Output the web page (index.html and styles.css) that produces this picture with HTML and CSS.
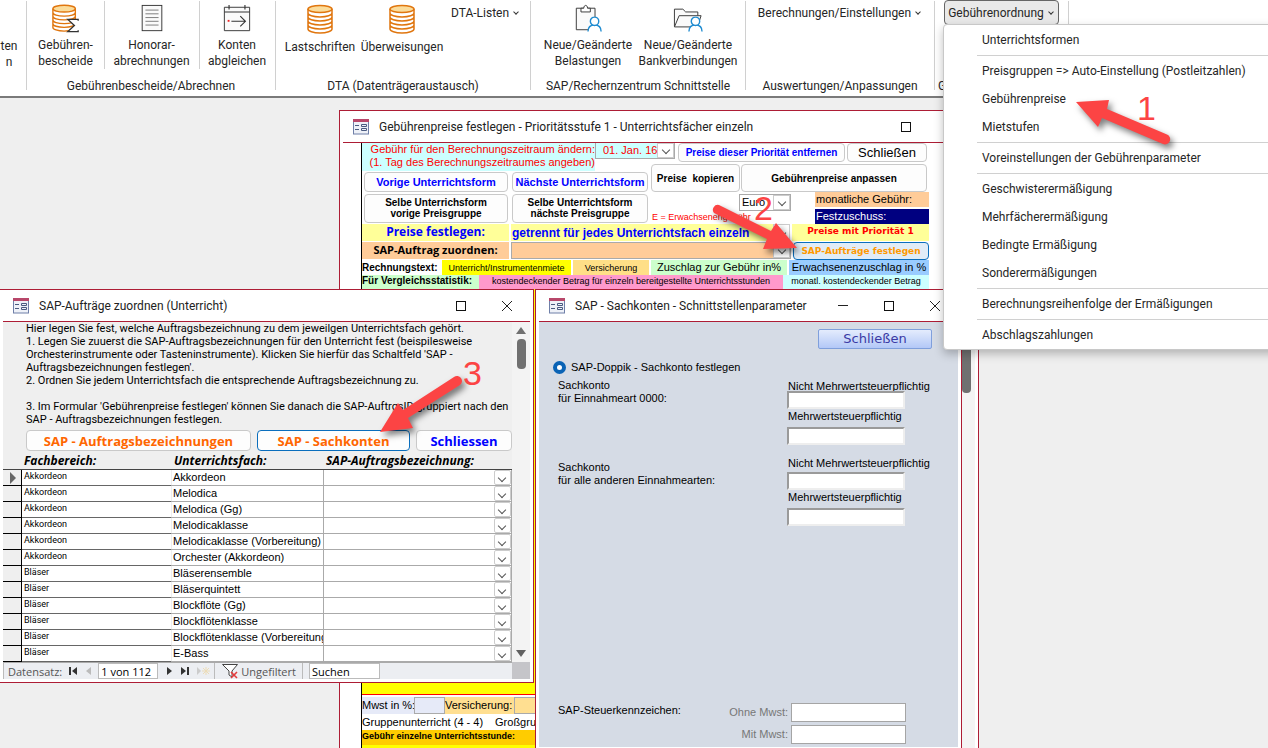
FILE: index.html
```html
<!DOCTYPE html>
<html lang="de">
<head>
<meta charset="utf-8">
<title>Gebührenordnung</title>
<link rel="stylesheet" href="styles.css">
</head>
<body>
<svg class="defs" aria-hidden="true">
  <symbol id="coins" viewBox="0 0 26 30">
    <path d="M1 5v20c0 2 5 4 12 4s12-2 12-4V5" fill="#fff"/>
    <ellipse cx="13" cy="5" rx="12" ry="3.6" fill="#fbdc9a"/>
    <g fill="none" stroke="#e0760f" stroke-width="1.5"><ellipse cx="13" cy="5" rx="12" ry="3.6"/><path d="M1 5v20c0 2 5 4 12 4s12-2 12-4V5M1 9c0 2.200 5 4 12 4s12-1.800 12-4M1 13c0 2.200 5 4 12 4s12-1.800 12-4M1 17c0 2.200 5 4 12 4s12-1.800 12-4M1 21c0 2.200 5 4 12 4s12-1.800 12-4"/></g>
  </symbol>
  <symbol id="form" viewBox="0 0 16 16">
    <rect x=".5" y=".5" width="15" height="14.500" fill="#eef1f8" stroke="#6f7fa8"/>
    <rect width="16" height="3" fill="#b8476a"/>
    <path d="M2 6.500h4M2 10.500h4M8.500 5.500h5v2h-5zM8.500 9.500h5v2h-5z" fill="none" stroke="#4a5a80"/>
  </symbol>
  <symbol id="max" viewBox="0 0 12 12"><rect x="1.500" y="1.500" width="9" height="9" fill="none" stroke="#111"/></symbol>
  <symbol id="close" viewBox="0 0 12 12"><path d="M1 1l10 10M11 1L1 11" fill="none" stroke="#222"/></symbol>
  <symbol id="min" viewBox="0 0 12 12"><path d="M1 5.500h10" fill="none" stroke="#222"/></symbol>
  <symbol id="person" viewBox="0 0 16 17"><path d="M1 16.500c0-5 3-7 7-7s7 2 7 7" fill="#fff" stroke="#1e8bd0" stroke-width="1.500"/><circle cx="8" cy="5.500" r="4.500" fill="#fff" stroke="#1e8bd0" stroke-width="1.500"/></symbol>
</svg>

<header class="ribbon">
  <section class="group g0"><div class="tools"><button class="tool cut"><span>ten<br>n</span></button></div></section>
  <section class="group g1">
    <div class="tools">
      <button class="tool"><svg viewBox="0 0 30 31" width="30" height="31"><use href="#coins" width="26" height="30"/><path d="M28 18v-1.500H17l7 6.500-7 6.500h11V28" fill="#fff" stroke="#333" stroke-width="1.400"/></svg><span>Gebühren-<br>bescheide</span></button>
      <button class="tool split wide"><svg viewBox="0 0 24 31" width="24" height="31"><rect x="1.500" y="1.500" width="21" height="27" fill="#fafafa" stroke="#333"/><path d="M5 6.500h14M5 10.500h14M5 14.500h14M5 18.500h14M5 22.500h14" stroke="#777"/></svg><span>Honorar-<br>abrechnungen</span></button>
      <button class="tool split"><svg viewBox="0 0 30 31" width="30" height="31"><path d="M1.500 3.500h27v25h-27z" fill="#fafafa" stroke="#333"/><path d="M1.500 8.500h27M6.500 1v5M23.500 1v5M9 18.500h15M18.500 13l5.500 5.500-5.500 5.500" fill="none" stroke="#333" stroke-width="1.200"/><path d="M5 17h2v2H5z" fill="#e22"/></svg><span>Konten<br>abgleichen</span></button>
    </div>
    <h2>Gebührenbescheide/Abrechnen</h2>
  </section>
  <section class="group g2">
    <div class="tools">
      <button class="tool"><svg width="26" height="31"><use href="#coins" width="26" height="30"/></svg><span>Lastschriften</span></button>
      <button class="tool"><svg width="26" height="31"><use href="#coins" width="26" height="30"/></svg><span>Überweisungen</span></button>
      <button class="drop">DTA-Listen<i></i></button>
    </div>
    <h2>DTA (Datenträgeraustausch)</h2>
  </section>
  <section class="group g3">
    <div class="tools">
      <button class="tool"><svg viewBox="0 0 30 31" width="30" height="31"><path d="M2.500 4.500h20v23h-20z" fill="#fafafa" stroke="#333"/><path d="M7.500 8.500v-4h3c0-4 4-4 4 0h3v4z" fill="#fff" stroke="#333"/><use href="#person" x="14" y="13" width="16" height="17"/></svg><span>Neue/Geänderte<br>Belastungen</span></button>
      <button class="tool"><svg viewBox="0 0 32 31" width="32" height="31"><path d="M1.500 24V5.500h9l3 3h13v4" fill="#fafafa" stroke="#333"/><path d="M1.500 24.500l5-12H30l-4 12z" fill="#fafafa" stroke="#333"/><use href="#person" x="16" y="13" width="16" height="17"/></svg><span>Neue/Geänderte<br>Bankverbindungen</span></button>
    </div>
    <h2>SAP/Rechernzentrum Schnittstelle</h2>
  </section>
  <section class="group g4">
    <div class="tools"><button class="drop">Berechnungen/Einstellungen<i></i></button></div>
    <h2>Auswertungen/Anpassungen</h2>
  </section>
  <section class="group g5">
    <div class="tools"><button class="drop open" aria-expanded="true">Gebührenordnung<i></i></button></div>
    <h2>G</h2>
    <nav class="menu">
      <button>Unterrichtsformen</button>
      <hr>
      <button>Preisgruppen =&gt; Auto-Einstellung (Postleitzahlen)</button>
      <button>Gebührenpreise</button>
      <button>Mietstufen</button>
      <hr>
      <button>Voreinstellungen der Gebührenparameter</button>
      <hr>
      <button>Geschwisterermäßigung</button>
      <button>Mehrfächerermäßigung</button>
      <button>Bedingte Ermäßigung</button>
      <button>Sonderermäßigungen</button>
      <hr>
      <button>Berechnungsreihenfolge der Ermäßigungen</button>
      <hr>
      <button>Abschlagszahlungen</button>
    </nav>
  </section>
</header>

<main class="desktop">
  <section class="window prices">
    <div class="titlebar"><svg width="16" height="16"><use href="#form"/></svg><h1>Gebührenpreise festlegen - Prioritätsstufe 1 - Unterrichtsfächer einzeln</h1>
      <button aria-label="Maximieren"><svg width="12" height="12"><use href="#max"/></svg></button><button aria-label="Schließen"><svg width="12" height="12"><use href="#close"/></svg></button></div>
    <div class="pane">
      <div class="selector"></div>
      <div class="price-form">
        <div class="top-grid">
          <label class="period" for="period">Gebühr für den Berechnungszeitraum ändern:<br>(1. Tag des Berechnungszeitraumes angeben)</label>
          <div class="top-row">
            <span class="combo date"><select id="period"><option>01. Jan. 16</option></select></span>
            <button class="btn blue remove">Preise dieser Priorität entfernen</button>
            <button class="btn plain">Schließen</button>
          </div>
          <button class="btn blue prev">Vorige Unterrichtsform</button>
          <button class="btn blue next">Nächste Unterrichtsform</button>
          <div class="copy-row"><button class="btn copy">Preise&nbsp; kopieren</button><button class="btn adapt">Gebührenpreise anpassen</button></div>
          <button class="btn prev-group">Selbe Unterrichsform<br>vorige Preisgruppe</button>
          <button class="btn next-group">Selbe Unterrichtsform<br>nächste Preisgruppe</button>
          <div class="currency"><span class="combo"><select aria-label="Währung"><option>Euro</option></select></span><span class="adult">E = Erwachsenengebühr</span></div>
          <div class="sums"><span class="monthly">monatliche Gebühr:</span><span class="grant">Festzuschuss:</span></div>
        </div>
        <div class="line set">
          <label for="mode" class="cap">Preise festlegen:</label>
          <span class="combo mode"><select id="mode"><option>getrennt für jedes Unterrichtsfach einzeln</option></select></span>
          <span class="prio">Preise mit Priorität 1</span>
        </div>
        <div class="line order">
          <label for="order" class="cap">SAP-Auftrag zuordnen:</label>
          <span class="combo"><select id="order"><option></option></select></span>
          <button class="btn assign">SAP-Aufträge festlegen</button>
        </div>
        <div class="line tags">
          <b class="t1">Rechnungstext:</b><span class="t2">Unterricht/Instrumentenmiete</span><span class="t3">Versicherung</span><span class="t4">Zuschlag zur Gebühr in%</span><span class="t5">Erwachsenenzuschlag in %</span>
        </div>
        <div class="line stats">
          <b class="s1">Für Vergleichsstatistik:</b><span class="s2">kostendeckender Betrag für einzeln bereitgestellte Unterrichtsstunden</span><span class="s3">monatl. kostendeckender Betrag</span>
        </div>
        <div class="records">
          <div class="vat"><label for="vat">Mwst in %:</label><input id="vat"><label class="ins" for="ins">Versicherung:</label><input id="ins" class="ins"></div>
          <div class="kinds"><span>Gruppenunterricht (4 - 4)</span><span>Großgruppe</span></div>
          <div class="single">Gebühr einzelne Unterrichtsstunde:</div>
        </div>
      </div>
      <div class="scroll"><div class="thumb"></div></div>
    </div>
  </section>

  <section class="window orders">
    <div class="titlebar"><svg width="16" height="16"><use href="#form"/></svg><h1>SAP-Aufträge zuordnen (Unterricht)</h1>
      <button aria-label="Maximieren"><svg width="12" height="12"><use href="#max"/></svg></button><button aria-label="Schließen"><svg width="12" height="12"><use href="#close"/></svg></button></div>
    <div class="pane">
      <div class="order-form">
        <div class="intro">
          <p>Hier legen Sie fest, welche Auftragsbezeichnung zu dem jeweilgen Unterrichtsfach gehört.</p>
          <p>1. Legen Sie zuuerst die SAP-Auftragsbezeichnungen für den Unterricht fest (beispilesweise<br>Orchesterinstrumente oder Tasteninstrumente). Klicken Sie hierfür das Schaltfeld 'SAP -<br>Auftragsbezeichnungen festlegen'.</p>
          <p>2. Ordnen Sie jedem Unterrichtsfach die entsprechende Auftragsbezeichnung zu.</p>
          <p class="gap">3. Im Formular 'Gebührenpreise festlegen' können Sie danach die SAP-AuftrgsID gruppiert nach den<br>SAP - Auftragsbezeichnungen festlegen.</p>
        </div>
        <div class="actions"><button class="btn big names">SAP - Auftragsbezeichnungen</button><button class="btn big accounts">SAP - Sachkonten</button><button class="btn big shut">Schliessen</button></div>
        <table>
          <thead><tr><th class="c0"></th><th class="c1">Fachbereich:</th><th class="c2">Unterrichtsfach:</th><th class="c3">SAP-Auftragsbezeichnung:</th></tr></thead>
          <tbody>
            <tr class="current"><td></td><td>Akkordeon</td><td>Akkordeon</td><td><span class="combo"><select aria-label="Auftrag 1"><option></option></select></span></td></tr>
            <tr><td></td><td>Akkordeon</td><td>Melodica</td><td><span class="combo"><select aria-label="Auftrag 2"><option></option></select></span></td></tr>
            <tr><td></td><td>Akkordeon</td><td>Melodica (Gg)</td><td><span class="combo"><select aria-label="Auftrag 3"><option></option></select></span></td></tr>
            <tr><td></td><td>Akkordeon</td><td>Melodicaklasse</td><td><span class="combo"><select aria-label="Auftrag 4"><option></option></select></span></td></tr>
            <tr><td></td><td>Akkordeon</td><td>Melodicaklasse (Vorbereitung)</td><td><span class="combo"><select aria-label="Auftrag 5"><option></option></select></span></td></tr>
            <tr><td></td><td>Akkordeon</td><td>Orchester (Akkordeon)</td><td><span class="combo"><select aria-label="Auftrag 6"><option></option></select></span></td></tr>
            <tr><td></td><td>Bläser</td><td>Bläserensemble</td><td><span class="combo"><select aria-label="Auftrag 7"><option></option></select></span></td></tr>
            <tr><td></td><td>Bläser</td><td>Bläserquintett</td><td><span class="combo"><select aria-label="Auftrag 8"><option></option></select></span></td></tr>
            <tr><td></td><td>Bläser</td><td>Blockflöte (Gg)</td><td><span class="combo"><select aria-label="Auftrag 9"><option></option></select></span></td></tr>
            <tr><td></td><td>Bläser</td><td>Blockflötenklasse</td><td><span class="combo"><select aria-label="Auftrag 10"><option></option></select></span></td></tr>
            <tr><td></td><td>Bläser</td><td>Blockflötenklasse (Vorbereitung</td><td><span class="combo"><select aria-label="Auftrag 11"><option></option></select></span></td></tr>
            <tr><td></td><td>Bläser</td><td>E-Bass</td><td><span class="combo"><select aria-label="Auftrag 12"><option></option></select></span></td></tr>
          </tbody>
        </table>
        <div class="recnav">
          <label for="rec">Datensatz:</label>
          <button aria-label="Erster"><svg width="10" height="8"><path d="M1 0h2v8H1zM9 0v8L4 4z" fill="#333"/></svg></button>
          <button aria-label="Voriger"><svg width="10" height="8"><path d="M7 0v8L2 4z" fill="#bbb"/></svg></button>
          <input id="rec" value="1 von 112">
          <button class="after" aria-label="Nächster"><svg width="10" height="8"><path d="M3 0v8l5-4z" fill="#333"/></svg></button>
          <button aria-label="Letzter"><svg width="10" height="8"><path d="M1 0v8l5-4zM7 0h2v8H7z" fill="#333"/></svg></button>
          <button aria-label="Neuer"><svg width="14" height="8"><path d="M1 0v8l4-4z" fill="#ccc"/><path d="M10 0v8M6 4h8M7 1l6 6M13 1L7 7" stroke="#ecdcb8"/></svg></button>
          <button class="filter"><svg width="18" height="16"><path d="M1.500 1.500h15L11 8v6l-3-2V8z" fill="#fff" stroke="#444"/><path d="M10 9l6 6M16 9l-6 6" stroke="#e43b3b" stroke-width="1.600"/></svg>Ungefiltert</button>
          <input class="search" aria-label="Suchen" value="Suchen">
        </div>
      </div>
      <div class="scroll arrows"><i class="up"></i><div class="thumb"></div><i class="down"></i><div class="corner"></div></div>
    </div>
  </section>

  <section class="window accounts-win">
    <div class="titlebar"><svg width="16" height="16"><use href="#form"/></svg><h1>SAP - Sachkonten - Schnittstellenparameter</h1>
      <button aria-label="Minimieren"><svg width="12" height="12"><use href="#min"/></svg></button><button aria-label="Maximieren"><svg width="12" height="12"><use href="#max"/></svg></button><button aria-label="Schließen"><svg width="12" height="12"><use href="#close"/></svg></button></div>
    <div class="pane account-form">
      <button class="shut-blue">Schließen</button>
      <label class="mode-radio"><input type="radio" checked>SAP-Doppik - Sachkonto festlegen</label>
      <div class="pair">
        <p>Sachkonto<br>für Einnahmeart 0000:</p>
        <div><label for="a1">Nicht Mehrwertsteuerpflichtig</label><input id="a1"><label class="second" for="a2">Mehrwertsteuerpflichtig</label><input id="a2"></div>
      </div>
      <div class="pair other">
        <p>Sachkonto<br>für alle anderen Einnahmearten:</p>
        <div><label for="b1">Nicht Mehrwertsteuerpflichtig</label><input id="b1"><label class="second" for="b2">Mehrwertsteuerpflichtig</label><input id="b2"></div>
      </div>
      <div class="tax">
        <p>SAP-Steuerkennzeichen:</p>
        <div><span><label for="t1">Ohne Mwst:</label><input id="t1"></span><span><label for="t2">Mit Mwst:</label><input id="t2"></span></div>
      </div>
    </div>
  </section>
</main>

<div class="mark m1"><svg width="120" height="80" viewBox="1066 86 120 80"><path d="M1076 102L1109 100 1107 109 1167 134.500A5 5 0 0 1 1163 144L1102 118 1098 127Z"/></svg><span>1</span></div>
<div class="mark m2"><svg width="120" height="80" viewBox="700 190 120 80"><path d="M797 248L776 223 771 231 719 205A5 5 0 0 0 714 213L767 239 763 249Z"/></svg><span>2</span></div>
<div class="mark m3"><svg width="120" height="80" viewBox="365 365 120 80"><path d="M380 432L398 403 403 410 454 377A5 5 0 0 1 460 385L408 418 413 428Z"/></svg><span>3</span></div>
</body>
</html>
```

FILE: styles.css
```css
:root { --red: #ad1d35; --ui: Roboto, "Noto Sans", sans-serif; --hum: "Open Sans", "Noto Sans", sans-serif; --sans: "Liberation Sans", Arial, sans-serif; --bold: "DejaVu Sans", Verdana, sans-serif; }
* { box-sizing: border-box; }
body { margin: 0; height: 100vh; overflow: hidden; position: relative; display: flex; flex-direction: column; background: #efefef; font: 11px/13px var(--sans); color: #000; }
h1, h2, p { margin: 0; font: inherit; }
button, input, select { margin: 0; padding: 0; border: 0; border-radius: 0; background: none; font: inherit; color: inherit; min-width: 0; }
.defs { position: absolute; width: 0; height: 0; }

/* Ribbon */
.ribbon { display: flex; flex: none; height: 98px; padding-top: 1px; background: #fff; border-bottom: 2px solid #7a7a7a; font: 12px/16px var(--ui); color: #262626; }
.group { position: relative; display: flex; flex-direction: column; height: 89px; border-right: 1px solid #d0d0d0; flex: none; }
.group h2 { margin-top: auto; height: 12px; line-height: 16px; text-align: center; white-space: nowrap; }
.tools { display: flex; justify-content: center; }
.tool { display: flex; flex-direction: column; align-items: center; width: 76px; height: 68px; padding-top: 3px; white-space: nowrap; }
.tool span { margin-top: 4px; }
.tool.cut { width: 16px; padding-top: 34px; margin-right: 8px; }
.tool.cut span { margin-top: 3px; }
.split { border-left: 1px solid #d0d0d0; }
.tool.wide { width: 95px; }
.g0 { width: 27px; }
.g1 { width: 249px; }
.g2 { width: 255px; }
.g3 { width: 215px; }
.g4 { width: 189px; }
.g5 { width: 134px; }
.g2 .tool { width: 82px; }
.g2 .tools { justify-content: flex-start; padding-left: 3px; }
.g2 .drop { margin-left: 4px; }
.g3 .tool { width: 100px; }
.drop { height: 24px; padding: 0 4px; white-space: nowrap; display: flex; align-items: center; gap: 4px; }
.drop i { width: 4px; height: 4px; border: solid #333; border-width: 0 1px 1px 0; transform: rotate(45deg); margin: 0 2px 2px 1px; }
.drop.open { margin-top: -1px; height: 25px; border: 1px solid #666; border-radius: 4px; background: #e9e9e9; padding: 0 3px; }
.g5 h2 { text-align: left; padding-left: 3px; }
.menu { position: absolute; z-index: 5; left: 8px; top: 23px; width: 340px; padding: 1px 0 0 38px; background: #fff; border: 1px solid #c8c8c8; border-radius: 4px; box-shadow: 0 4px 10px rgba(0, 0, 0, .25); }
.menu button { display: block; height: 28px; white-space: nowrap; }
.menu hr { margin: 1px 0 1px -5px; border: 0; height: 1px; background: #d0d0d0; }

/* Windows */
.desktop { position: relative; flex: 1; }
.window { position: absolute; display: flex; flex-direction: column; background: #fff; border: 1px solid var(--red); padding: 0 3px 3px; }
.titlebar { display: flex; flex: none; align-items: center; height: 32px; padding-left: 10px; border-bottom: 1px solid var(--red); font: 12px/16px var(--ui); color: #222; }
.titlebar h1 { flex: 1; margin-left: 10px; white-space: nowrap; }
.titlebar button { width: 46px; height: 31px; display: grid; place-items: center; }
.pane { display: flex; flex: 1; min-height: 0; }
.prices { left: 339px; top: 12px; width: 640px; height: 660px; }
.orders { left: -1px; top: 191px; width: 535px; height: 394px; }
.accounts-win { left: 535px; top: 191px; width: 427px; height: 462px; }

.btn { border: 1px solid #c9c9c9; border-radius: 4px; background: #fdfdfd; font: bold 10px/11px var(--sans); white-space: nowrap; }
.btn.blue, .btn.shut { color: #00f; }
.combo { position: relative; display: flex; background: #fff; border: 1px solid #aaa; }
.combo select { appearance: none; flex: 1; padding: 0 15px 0 2px; white-space: nowrap; overflow: hidden; }
.combo::before { content: ""; position: absolute; right: 0; top: 0; bottom: 0; width: 15px; background: #fff; border: 1px solid #ccc; pointer-events: none; }
.combo::after { content: ""; position: absolute; right: 5px; bottom: 5px; width: 5px; height: 5px; border: solid #555; border-width: 0 1px 1px 0; transform: rotate(45deg); pointer-events: none; }

/* Price form */
.selector { width: 19px; flex: none; border-right: 1px solid #000; background: #fff; }
.price-form { display: flex; flex-direction: column; flex: 1; background: #ff0; }
.top-grid { display: grid; grid-template-columns: 150px 83px 56px 88px 76px 114px; grid-template-rows: 20px 8px 21px 32px; background: #fff; }
.period { grid-area: 1 / 1 / 3 / 3; background: #cff; color: #f00; text-align: right; white-space: nowrap; }
.top-row { grid-area: 1 / 3 / 2 / 7; display: flex; align-items: flex-start; }
.date { width: 80px; height: 16px; margin-right: 3px; background: #cff; color: #f00; border-top: 0; }
.date select { padding-left: 7px; }
.remove { width: 167px; height: 19px; margin-right: 2px; }
.btn.plain { width: 80px; height: 19px; font: 13px/15px var(--sans); }
.prev, .next { height: 20px; align-self: end; }
.btn.prev, .btn.next { font-size: 11px; }
.prev, .prev-group { grid-column: 1; margin: 0 4px 0 2px; }
.next, .next-group { grid-column: 2 / 4; margin-right: 3px; }
.prev, .next { grid-row: 3; }
.prev-group, .next-group { grid-row: 4; height: 29px; align-self: center; }
.copy-row { grid-area: 2 / 4 / 4 / 7; display: flex; gap: 1px; margin-top: 1px; }
.copy { width: 89px; }
.adapt { width: 186px; }
.currency { grid-area: 4 / 4 / 5 / 6; display: flex; flex-direction: column; padding: 2px 24px 0 1px; }
.currency .combo { width: 52px; height: 17px; align-self: flex-end; }
.adult { color: #f00; font-size: 9px; white-space: nowrap; }
.sums { grid-area: 4 / 6; display: flex; flex-direction: column; gap: 2px; line-height: 14px; white-space: nowrap; }
.sums span { padding-left: 1px; height: 15px; }
.monthly { background: #fc9; }
.grant { background: #000080; color: #fff; }
.line { display: flex; width: 567px; white-space: nowrap; box-shadow: 19px 0 #fff, 40px 0 #fff; background: #fff; }
.cap { width: 147px; font: bold 12px/16px var(--hum); text-align: center; }
.set { height: 18px; padding-bottom: 1px; gap: 2px; }
.set .cap, .prio { background: #ff9; color: #00f; }
.mode { flex: 1; border: 0; background: #ff9; color: #00f; font: bold 12px/16px var(--sans); }
.mode select { padding-left: 1px; }
.prio { width: 137px; color: #f00; font: bold 9px/14px var(--bold); text-align: center; }
.order { height: 18px; gap: 2px; }
.order .cap, .order .combo { background: #fc9; }
.order .cap { height: 17px; font-size: 11px; }
.order .combo { flex: 1; height: 17px; }
.btn.assign { width: 136px; height: 18px; border-color: #0a6ebd; background: #e0ecf7; color: #f90; font: bold 9px/14px var(--bold); }
.tags { height: 15px; gap: 2px; font-size: 9px; line-height: 16px; text-align: center; }
.tags b, .stats b { font-size: 10px; text-align: left; }
.t1 { width: 78px; }
.t2 { width: 129px; background: #ff0; }
.t3 { width: 76px; background: #ffdf87; }
.t4 { width: 136px; background: #cfc; font-size: 11px; line-height: 14px; }
.t5 { flex: 1; background: #9cf; font-size: 11px; line-height: 14px; }
.stats { height: 14px; font-size: 9px; line-height: 12px; text-align: center; }
.s1 { width: 117px; background: #cfc; }
.s2 { width: 304px; background: #f9c; }
.s3 { flex: 1; background: #cff; }
.records { margin-top: auto; margin-bottom: 21px; background: #fff; border-top: 1px solid #f00; padding-top: 2px; white-space: nowrap; }
.vat { display: flex; height: 17px; line-height: 16px; }
.vat label, .vat input { background: #e6eaf8; }
.vat label { width: 52px; }
.vat input { width: 31px; border: 1px solid #aaa; }
.vat .ins { width: 69px; background: #ffdf91; }
.kinds { display: flex; gap: 12px; height: 16px; line-height: 16px; }
.single { height: 15px; background: #fc0; font: bold 9px/12px var(--sans); }
.scroll { width: 14px; flex: none; background: #f3f3f3; }
.prices .thumb { width: 9px; height: 250px; margin: 0 0 0 1px; border-radius: 4px; background: #707070; }
.prices .scroll { background: #f4f4f4; }

/* Orders form */
.order-form { flex: 1; min-width: 0; display: flex; flex-direction: column; background: #efefef; }
.intro { height: 108px; padding: 0 0 0 23px; font: 11px/13px var(--ui); white-space: nowrap; }
.gap { margin-top: 13px; }
.actions { display: flex; gap: 6px; padding: 1px 0 1px 23px; }
.btn.big { height: 21px; font: bold 13px/16px var(--hum); color: #f60; }
.names { width: 225px; }
.btn.accounts { width: 153px; border-color: #0a6ebd; }
.btn.big.shut { width: 96px; color: #00f; }
table { border-collapse: separate; border-spacing: 0; table-layout: fixed; width: 100%; }
th { height: 18px; padding: 0 0 0 2px; text-align: left; font: italic bold 12px/16px var(--hum); border-bottom: 1px solid #444; white-space: nowrap; }
.c0 { width: 19px; }
.c1 { width: 150px; }
.c2 { width: 152px; }
td { height: 16px; padding: 0 0 0 2px; background: #fff; border-right: 1px solid #aaa; border-bottom: 1px solid #aaa; white-space: nowrap; overflow: hidden; line-height: 15px; }
td:nth-child(1) { background: #efefef; border-color: #000; }
td:nth-child(2) { border-right-color: #eee; border-bottom-color: #666; font: 9px/12px var(--ui); vertical-align: top; }
td:nth-child(3) { padding-left: 1px; }
td:nth-child(4) { padding: 0; }
td .combo { border: 0; height: 15px; }
td .combo::after { bottom: 4px; right: 6px; }
td .combo::before { border-radius: 2px; }
.current td:first-child::after { content: ""; display: block; width: 0; height: 0; margin-left: 5px; border: 6px solid transparent; border-left-color: #666; border-right: 0; }
.recnav { display: flex; align-items: center; flex: 1; border-top: 1px solid #aaa; border-left: 1px solid #bbb; background: #eceef2; padding-left: 4px; font: 11px/15px var(--hum); color: #555; }
.recnav button { display: flex; align-items: center; margin-left: 6px; }
.recnav input { width: 60px; height: 16px; margin-left: 2px; padding-left: 2px; border: 1px solid #bbb; background: #fff; color: #000; }
.recnav button + input { margin-left: 4px; }
.recnav .filter { margin-left: 4px; padding: 0 6px; border: solid #bbb; border-width: 0 1px; gap: 2px; }
.recnav .search { width: 71px; margin-left: 6px; }
.arrows { width: 18px; display: flex; flex-direction: column; align-items: center; }
.arrows i { width: 0; height: 0; border: 5px solid transparent; }
.arrows .up { border-bottom: 7px solid #707070; border-top: 0; margin-top: 5px; }
.arrows .thumb { width: 9px; height: 30px; margin-top: 5px; border-radius: 4px; background: #707070; }
.arrows .down { margin-top: auto; border-top: 7px solid #606060; border-bottom: 0; }
.corner { width: 18px; height: 17px; margin-top: 5px; background: #c5c5c9; }

/* Account form */
.account-form { flex-direction: column; background: #d5dbe5; padding: 7px 26px 3px 14px; }
.shut-blue { align-self: flex-end; width: 114px; height: 20px; border: 1px solid #7f9fdc; border-radius: 2px; background: linear-gradient(#e4ecfd, #b3c8f7); color: #3a3aa5; font: 13px/16px var(--bold); }
.mode-radio { display: flex; align-items: center; gap: 5px; height: 14px; margin-top: 11px; }
.mode-radio input { appearance: none; width: 13px; height: 13px; border: 4px solid #0a63b5; border-radius: 50%; background: #fff; }
.pair { display: flex; justify-content: space-between; margin: 5px 0 0 5px; white-space: nowrap; }
.pair > div { width: 146px; display: flex; flex-direction: column; padding: 1px; }
.pair > div label { height: 11px; padding-left: 1px; }
.pair div input { width: 118px; height: 18px; background: #fff; border: 2px inset #eee; flex: none; }
.pair .second { margin: 1px 0 6px; }
.pair.other { margin-top: 10px; }
.pair.other p { padding-top: 5px; }
.pair.other input { margin-top: 4px; }
.pair.other .second { margin: 1px 0 2px; }
.tax { display: flex; justify-content: space-between; margin-top: auto; padding: 0 26px 0 5px; }
.tax p { padding-top: 1px; }
.tax div { display: flex; flex-direction: column; gap: 3px; }
.tax span { display: flex; justify-content: flex-end; align-items: center; gap: 3px; color: #777; }
.tax input { width: 115px; height: 19px; background: #fff; border: 1px solid #a5a5a5; }

/* Annotations */
.mark { position: absolute; z-index: 10; color: #fc4444; pointer-events: none; }
.mark svg { display: block; overflow: visible; fill: #fc4444; filter: drop-shadow(3px 4px 3px rgba(0, 0, 0, .5)); }
.mark span { position: absolute; font: 34px/34px var(--sans); }
.m1 { left: 1066px; top: 86px; }
.m1 span { left: 71px; top: 5px; }
.m2 { left: 700px; top: 190px; }
.m2 span { left: 54px; top: 1px; }
.m3 { left: 365px; top: 365px; }
.m3 span { left: 98px; top: -9px; }
```
